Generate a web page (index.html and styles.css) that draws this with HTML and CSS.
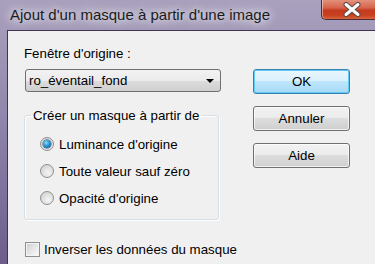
FILE: index.html
```html
<!DOCTYPE html>
<html lang="fr">
<head>
  <meta charset="UTF-8">
  <meta name="viewport" content="width=device-width, initial-scale=1.0">
  <title>Ajout d'un masque</title>
  <link rel="stylesheet" href="styles.css">
</head>
<body>
  <div class="window">
    <!-- Barre de titre -->
    <div class="titlebar">
      <div class="title">Ajout d'un masque à partir d'une image</div>
      <div class="close">
        <svg width="18" height="15" viewBox="0 0 18 15">
          <path d="M3 2.5 L15 12.5 M15 2.5 L3 12.5" stroke="#5a4a4a" stroke-width="5" stroke-linecap="round"/>
          <path d="M3 2.5 L15 12.5 M15 2.5 L3 12.5" stroke="#ffffff" stroke-width="3" stroke-linecap="round"/>
        </svg>
      </div>
    </div>

    <!-- Contenu -->
    <div class="client">
      <div class="main">
        <div class="label">Fenêtre d'origine :</div>
        <div class="combo">
          <span>ro_éventail_fond</span>
          <span class="arrow"></span>
        </div>

        <fieldset class="group">
          <legend>Créer un masque à partir de</legend>
          <div class="radio-row"><span class="radio checked"></span>Luminance d'origine</div>
          <div class="radio-row"><span class="radio"></span>Toute valeur sauf zéro</div>
          <div class="radio-row"><span class="radio"></span>Opacité d'origine</div>
        </fieldset>

        <div class="check-row"><span class="checkbox"></span>Inverser les données du masque</div>
      </div>

      <div class="side">
        <button class="btn default">OK</button>
        <button class="btn">Annuler</button>
        <button class="btn">Aide</button>
      </div>
    </div>
  </div>
</body>
</html>
```

FILE: styles.css
```css
/* Base */
body {
  margin: 0;
  padding: 0;
  overflow: hidden;
  font-family: 'Liberation Sans', Arial, sans-serif;
  font-size: 13.3px;
  color: #000;
}

/* Cadre de la fenêtre */
.window {
  width: 375px;
  height: 264px;
  display: flex;
  flex-direction: column;
  background: linear-gradient(180deg, #a8a0bd 0%, #9f96b6 20%, #8a7ea6 55%, #6c5d8c 100%);
  overflow: hidden;
}

.titlebar {
  height: 30px;
  display: flex;
  justify-content: space-between;
  align-items: flex-start;
}

.title {
  padding-left: 10px;
  line-height: 30px;
  font-size: 15px;
  color: #1b1b1b;
  text-shadow: 0 0 8px #fff, 0 0 12px rgba(255, 255, 255, 0.8);
}

/* Bouton fermer */
.close {
  width: 54px;
  height: 20px;
  box-sizing: border-box;
  border: 1px solid #4b2f35;
  border-top: none;
  border-right: none;
  border-radius: 0 0 0 5px;
  background: linear-gradient(180deg, #e3907c 0%, #d6654b 40%, #c33a1f 55%, #c8401f 80%, #d9643c 100%);
  box-shadow: inset 1px 0 0 rgba(255, 255, 255, 0.45);
}

.close svg {
  display: block;
  margin: 2px 0 0 21px;
}

/* Zone client */
.client {
  flex: 1;
  display: flex;
  margin-left: 7px;
  border-left: 1px solid #3e3552;
  border-top: 1px solid #3e3552;
  background: #f0f0f0;
}

.main {
  width: 213px;
  flex-shrink: 0;
  box-sizing: border-box;
  padding: 15px 0 0 16px;
  white-space: nowrap;
}

.label {
  line-height: 15px;
  margin-bottom: 8px;
}

/* Liste déroulante */
.combo {
  width: 196px;
  height: 23px;
  margin-left: 1px;
  box-sizing: border-box;
  display: flex;
  align-items: center;
  padding-left: 3px;
  border: 1px solid #707070;
  border-radius: 3px;
  background: linear-gradient(180deg, #f2f2f2 0%, #ebebeb 50%, #dddddd 50%, #cfcfcf 100%);
}

.combo .arrow {
  margin-left: auto;
  margin-right: 6px;
  width: 0;
  height: 0;
  border-left: 4px solid transparent;
  border-right: 4px solid transparent;
  border-top: 4px solid #000;
}

/* Groupe */
.group {
  width: 195px;
  box-sizing: border-box;
  margin: 16px 0 0 0;
  padding: 11px 0 11px 15px;
  border: 1px solid #d5dfe5;
  border-radius: 3px;
  box-shadow: inset 1px 1px 0 #fff, 1px 1px 0 #fff;
  display: flex;
  flex-direction: column;
  gap: 7px;
}

.group legend {
  margin-left: -9px;
  padding: 0 2px;
  line-height: 15px;
}

.radio-row {
  height: 20px;
  display: flex;
  align-items: center;
  gap: 5px;
}

.radio {
  width: 14px;
  height: 14px;
  box-sizing: border-box;
  border-radius: 50%;
  border: 1px solid #8e8f8f;
  background: radial-gradient(circle at 60% 65%, #f4f4f4 0%, #e2e2e2 45%, #c9c9c9 100%);
  position: relative;
}

.radio.checked::after {
  content: "";
  position: absolute;
  left: 2px;
  top: 2px;
  width: 8px;
  height: 8px;
  border-radius: 50%;
  background: radial-gradient(circle at 40% 35%, #8fdcff 0%, #2b94d0 45%, #0d4f7c 100%);
  box-shadow: 0 0 0 0.5px #1c4d6e;
}

/* Case à cocher */
.check-row {
  margin-top: 19px;
  margin-left: 1px;
  height: 20px;
  display: flex;
  align-items: center;
  gap: 4px;
}

.checkbox {
  width: 15px;
  height: 15px;
  flex-shrink: 0;
  box-sizing: border-box;
  border: 1px solid #8e8f8f;
  background: linear-gradient(135deg, #cbcbcb 0%, #e6e6e6 50%, #fbfbfb 100%);
  box-shadow: inset 0 0 0 1px #f4f4f4;
}

/* Boutons */
.side {
  padding: 38px 0 0 32px;
  display: flex;
  flex-direction: column;
  gap: 12px;
}

.btn {
  width: 97px;
  height: 25px;
  padding: 0;
  font-family: 'Liberation Sans', Arial, sans-serif;
  font-size: 13.3px;
  color: #000;
  border: 1px solid #707070;
  border-radius: 3px;
  background: linear-gradient(180deg, #f2f2f2 0%, #ebebeb 50%, #dddddd 50%, #cfcfcf 100%);
  box-shadow: inset 0 0 0 1px rgba(255, 255, 255, 0.7);
}

.btn.default {
  border-color: #3c7fb1;
  background: linear-gradient(180deg, #eaf6fd 0%, #d9f0fc 50%, #bee6fd 50%, #a7d9f5 100%);
  box-shadow: inset 0 0 0 1px #5ecbf5;
}
```
